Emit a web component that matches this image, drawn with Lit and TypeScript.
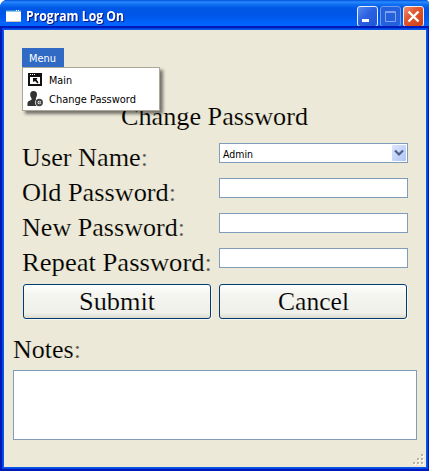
import { LitElement, html, css, svg } from "lit";
import { customElement } from "lit/decorators.js";

const run = (text: string, width: number, height: number, base: number, cls: string) => {
  const colon = text.endsWith(":");
  const body = colon ? text.slice(0, -1) : text;
  return html`<svg class="run ${cls}" width=${width} height=${height}>
    <text x="0" y=${base} textLength=${width} lengthAdjust="spacingAndGlyphs">${body}${colon ? svg`<tspan class="colon">:</tspan>` : ""}</text>
  </svg>`;
};

@customElement("title-bar")
class TitleBar extends LitElement {
  static styles = css`
    :host { display: flex; height: 30px; padding: 0 5px 0 6px; box-sizing: border-box; position: relative;
      background: linear-gradient(#0050d8 0, #2a8bff 2px, #1273f5 4px, #0058e6 8px, #0055e5 14px, #005ef5 20px, #0066ff 25px, #0060f5 27px, #0046cc 30px); }
    .app { margin: 10px 5px 0 0; width: 15px; height: 12px; }
    .run { display: block; overflow: visible; }
    .caption { font: bold 13.5px "Open Sans", "Noto Sans", sans-serif; fill: #fff; filter: drop-shadow(1px 1px 0 #0a1883); }
    .buttons { display: flex; gap: 2px; margin: 6px 0 0 auto; }
    .buttons svg { display: block; }
  `;
  render() {
    const frame = (fill: string, edge: string) => svg`<rect x=".5" y=".5" width="20" height="20" rx="2.5" fill=${fill} stroke=${edge}></rect>`;
    return html`
      <svg class="app"><rect width="15" height="12" fill="#fff"></rect><rect width="15" height="1.500" fill="#2a8be0"></rect><path d="M10 0h1v1h-1zM12 0h1v1h-1z" fill="#fff"></path><path d="M0 11.5h15" stroke="#c8c8c0"></path></svg>
      ${run("Program Log On", 98, 30, 21, "caption")}
      <div class="buttons">
        <svg width="21" height="21"><defs><linearGradient id="b" x2="1" y2="1"><stop stop-color="#5b8cf2"></stop><stop offset=".45" stop-color="#2a62e0"></stop><stop offset="1" stop-color="#1d55dc"></stop></linearGradient></defs>
          ${frame("url(#b)", "#e8effc")}<rect x="5" y="13" width="7" height="3" fill="#fff"></rect></svg>
        <svg width="21" height="21">${frame("#2560dd", "#6f9af0")}<path d="M5.5 5.5h10v10h-10zM5 6.5h11" fill="none" stroke="#7fa3ee"></path></svg>
        <svg width="21" height="21"><defs><linearGradient id="r" x2="1" y2="1"><stop stop-color="#ee9478"></stop><stop offset=".4" stop-color="#df5730"></stop><stop offset="1" stop-color="#cf3f14"></stop></linearGradient></defs>
          ${frame("url(#r)", "#f6ece8")}<path d="M5.500 5.500l10 10M15.500 5.500l-10 10" stroke="#fff" stroke-width="2.400"></path></svg>
      </div>`;
  }
}

@customElement("app-root")
class AppRoot extends LitElement {
  static styles = css`
    :host { display: block; width: 430px; height: 472px; overflow: hidden; background: #fff; }
    .window { width: 429px; height: 471px; box-sizing: border-box; display: flex; flex-direction: column; border-radius: 7px 4px 0 0; overflow: hidden; background: #0046e0; }
    .client { flex: 1; margin: 0 3px 4px 4px; background: #ece9d8; position: relative; padding: 18px 9px 0; box-sizing: border-box; box-shadow: 0 0 0 1px #0a55ec, 0 0 0 2px #0046e0, 0 0 0 4px #0019b8; }
    .run { display: block; overflow: visible; }
    .serif { font: 26px "Liberation Serif", serif; fill: #000; stroke: #ece9d8; stroke-width: .15px; }
    .button .serif { stroke: #f3f3ee; }
    .colon { fill: #5c5a53; }
    .ui { font: 11px "DejaVu Sans Condensed", "DejaVu Sans", sans-serif; font-stretch: condensed; fill: #000; }
    .light { fill: #fff; }
    .menu { position: relative; width: 42px; height: 19px; margin-left: 9px; padding-left: 7px; box-sizing: border-box; background: #316ac5; }
    .drop { position: absolute; z-index: 1; left: 0; top: 19px; width: 138px; height: 44px; box-sizing: border-box; padding: 2px 0 0 4px; border: 1px solid #aca899; background: #fff; box-shadow: 3px 3px 3px rgba(0, 0, 0, .5); }
    .item { display: flex; height: 19px; gap: 5px; }
    .item .icon { width: 17px; height: 19px; flex: none; }
    .heading { display: flex; height: 43px; margin: 33px 0 0 108px; }
    .row { display: flex; height: 35px; margin-left: 9px; }
    .cell { width: 197px; }
    .field { width: 189px; height: 20px; box-sizing: border-box; border: 1px solid #7f9db9; background: #fff; display: flex; justify-content: space-between; padding: 0 1px 0 3px; }
    .arrow { margin-top: 1px; display: block; }
    .actions { display: flex; gap: 8px; margin: 1px 0 0 10px; }
    .button { width: 188px; height: 35px; box-sizing: border-box; border: 1px solid #003c74; border-radius: 3px; display: flex; justify-content: center; background: linear-gradient(#fff, #f5f5f1 25%, #f0f0ea 85%, #dedbcd); box-shadow: 1px 1px 0 #f7f5ec; }
    .notes { height: 51px; }
    .area { width: 404px; height: 70px; box-sizing: border-box; border: 1px solid #7f9db9; background: #fff; }
    .grip { position: absolute; right: 1px; bottom: 1px; }
  `;
  render() {
    const row = (text: string, width: number, content: unknown = "") => html`
      <div class="row"><div class="cell">${run(text, width, 35, 23, "serif")}</div><div class="field">${content}</div></div>`;
    return html`
      <div class="window">
        <title-bar></title-bar>
        <div class="client">
          <div class="menu">
            ${run("Menu", 27, 19, 14, "ui light")}
            <div class="drop">
              <div class="item">
                <svg class="icon"><path d="M1 3h14v13H1z" fill="#111"></path><path d="M3 7h10v7H3z" fill="#fff"></path><path d="M3 4h1v1H3zM5 4h1v1H5zM7 4h1v1H7z" fill="#fff"></path><path d="M6 8h4.500l-1 1.500 2 3-1 1-2.500-2.500L6 12z" fill="#111"></path></svg>
                ${run("Main", 23, 19, 14, "ui")}
              </div>
              <div class="item">
                <svg class="icon"><path d="M6.500 2c2.500 0 3.700 1.500 3.500 4-.1 1.500-1 2.700-1.200 3.700 0 1 .7 1.300 2 1.600L10 17H.5c-.3-3.500.2-4.700 2-5.300 1.500-.5 2.200-.9 2.200-1.900-.5-1-1.400-2.200-1.500-3.800C3 3.500 4.200 2 6.500 2z" fill="#333"></path><circle cx="12.300" cy="13.500" r="4.400" fill="#fff"></circle><circle cx="12.300" cy="13.500" r="2.700" fill="#fff" stroke="#444" stroke-width="1.900"></circle><path d="M12.300 12v3M10.800 13.500h3" stroke="#888"></path></svg>
                ${run("Change Password", 87, 19, 14, "ui")}
              </div>
            </div>
          </div>
          <div class="heading">${run("Change Password", 187, 43, 25, "serif")}</div>
          <div class="form">
            ${row("User Name:", 126, html`${run("Admin", 30, 18, 14, "ui")}
              <svg class="arrow" width="14" height="16"><defs><linearGradient id="a" x2="1" y2="1"><stop stop-color="#dce6ff"></stop><stop offset="1" stop-color="#afc5f5"></stop></linearGradient></defs><rect width="14" height="16" rx="1" fill="url(#a)"></rect><path d="M3 5.500l4 4 4-4" fill="none" stroke="#4d6185" stroke-width="2.200"></path></svg>`)}
            ${row("Old Password:", 154)}
            ${row("New Password:", 163)}
            ${row("Repeat Password:", 190)}
          </div>
          <div class="actions">
            <div class="button">${run("Submit", 76, 33, 25, "serif")}</div>
            <div class="button">${run("Cancel", 71, 33, 25, "serif")}</div>
          </div>
          <div class="notes">${run("Notes:", 68, 51, 39, "serif")}</div>
          <div class="area"></div>
          <svg class="grip" width="12" height="12">
            ${[[8, 0], [4, 4], [8, 4], [0, 8], [4, 8], [8, 8]].map(([x, y]) => svg`<rect x=${x + 1} y=${y + 1} width="2" height="2" fill="#fff"></rect><rect x=${x} y=${y} width="2" height="2" fill="#b8b4a3"></rect>`)}
          </svg>
        </div>
      </div>`;
  }
}
